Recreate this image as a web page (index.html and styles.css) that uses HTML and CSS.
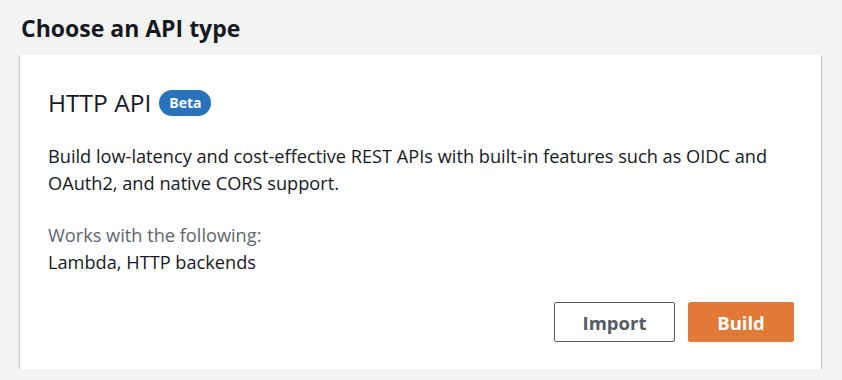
FILE: index.html
```html
<!DOCTYPE html>
<html>
    <head>
        <title>Choose an API type</title>
        <link rel="stylesheet" href="styles.css">
    </head>
    <body>
        <div class="page">
            <h2 class="page-title">Choose an API type</h2>
            <div class="api-card">
                <div class="card-head">
                    <span class="card-title">HTTP API</span>
                    <span class="badge">Beta</span>
                </div>
                <p class="card-desc">Build low-latency and cost-effective REST APIs with built-in features such as OIDC and OAuth2, and native CORS support.</p>
                <div class="works-with">
                    <div class="works-label">Works with the following:</div>
                    <div class="works-value">Lambda, HTTP backends</div>
                </div>
                <div class="card-actions">
                    <button class="btn btn-normal">Import</button>
                    <button class="btn btn-primary">Build</button>
                </div>
            </div>
        </div>
    </body>
</html>
```

FILE: styles.css
```css
/* Page */
body {
    margin: 0;
    background-color: #f2f3f3;
    font-family: "Open Sans", "Noto Sans", sans-serif;
    color: #16191f;
}

.page {
    padding: 12px 21px 0 20px;
}

.page-title {
    margin: 0 0 11px 1px;
    font-size: 23px;
    line-height: 32px;
    font-weight: 700;
}

/* Card */
.api-card {
    box-sizing: border-box;
    width: 801px;
    height: 314px;
    background-color: #fff;
    padding: 30px 27px 27px 28px;
    display: flex;
    flex-direction: column;
    box-shadow: 0 1px 1px 0 rgba(0, 28, 36, 0.3), 1px 1px 1px 0 rgba(0, 28, 36, 0.15), -1px 1px 1px 0 rgba(0, 28, 36, 0.15);
}

.card-head {
    display: flex;
    align-items: center;
    gap: 8px;
    height: 36px;
}

.card-title {
    font-size: 24.5px;
    line-height: 36px;
}

.badge {
    background-color: #2b72bd;
    color: #fff;
    font-size: 14px;
    font-weight: 700;
    line-height: 26px;
    padding: 0 10px;
    border-radius: 13px;
}

.card-desc,
.works-with {
    font-size: 18.2px;
    line-height: 27px;
}

.card-desc {
    margin: 22px 0 0 0;
}

.works-with {
    margin-top: 25px;
}

.works-label {
    color: #5f6670;
}

/* Buttons */
.card-actions {
    margin-top: auto;
    display: flex;
    justify-content: flex-end;
    gap: 13px;
}

.btn {
    box-sizing: border-box;
    height: 40px;
    font-family: inherit;
    font-size: 18.5px;
    font-weight: 700;
    border-radius: 2px;
    cursor: pointer;
}

.btn-normal {
    width: 121px;
    background-color: #fff;
    color: #545b64;
    border: 1px solid #545b64;
}

.btn-primary {
    width: 106px;
    background-color: #e07a36;
    color: #fff;
    border: 1px solid #e07a36;
}
```
